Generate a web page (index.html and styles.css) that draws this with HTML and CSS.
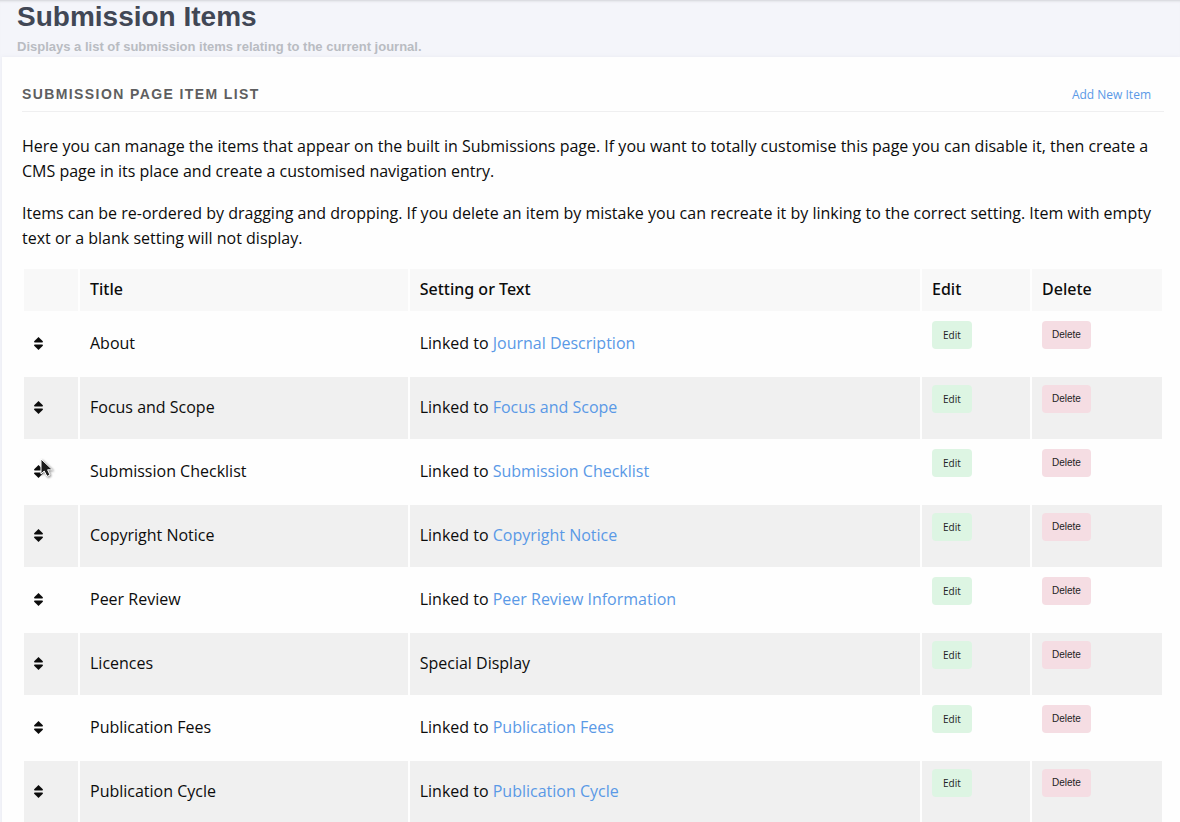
FILE: index.html
```html
<!DOCTYPE html>
<html lang="en">
<head>
    <meta charset="UTF-8">
    <meta name="viewport" content="width=device-width, initial-scale=1.0">
    <title>Submission Items</title>
    <link rel="stylesheet" href="styles.css">
</head>
<body>
    <svg class="sprite" aria-hidden="true">
        <symbol id="sort" viewBox="0 0 9 13">
            <path d="M4.5 0 L8.8 4.2 Q9.2 5.5 8.2 5.5 H0.8 Q-0.2 5.5 0.2 4.2 Z"/>
            <path d="M4.5 13 L8.8 8.8 Q9.2 7.5 8.2 7.5 H0.8 Q-0.2 7.5 0.2 8.8 Z"/>
        </symbol>
    </svg>

    <header class="page-header">
        <h1>Submission Items</h1>
        <p class="subtitle">Displays a list of submission items relating to the current journal.</p>
    </header>

    <main class="card">
        <div class="card-title">
            <h2>Submission Page Item List</h2>
            <a class="add-link" href="#">Add New Item</a>
        </div>

        <p>Here you can manage the items that appear on the built in Submissions page. If you want to totally customise this page you can disable it, then create a CMS page in its place and create a customised navigation entry.</p>
        <p>Items can be re-ordered by dragging and dropping. If you delete an item by mistake you can recreate it by linking to the correct setting. Item with empty text or a blank setting will not display.</p>

        <table class="items">
            <colgroup>
                <col class="col-handle">
                <col class="col-title">
                <col>
                <col class="col-edit">
                <col class="col-delete">
            </colgroup>
            <thead>
                <tr>
                    <th></th>
                    <th>Title</th>
                    <th>Setting or Text</th>
                    <th>Edit</th>
                    <th>Delete</th>
                </tr>
            </thead>
            <tbody>
                <tr>
                    <td><svg class="handle"><use href="#sort"/></svg></td>
                    <td>About</td>
                    <td>Linked to <a href="#">Journal Description</a></td>
                    <td class="action"><a class="btn btn-edit" href="#">Edit</a></td>
                    <td class="action"><button class="btn btn-delete" type="button">Delete</button></td>
                </tr>
                <tr>
                    <td><svg class="handle"><use href="#sort"/></svg></td>
                    <td>Focus and Scope</td>
                    <td>Linked to <a href="#">Focus and Scope</a></td>
                    <td class="action"><a class="btn btn-edit" href="#">Edit</a></td>
                    <td class="action"><button class="btn btn-delete" type="button">Delete</button></td>
                </tr>
                <tr>
                    <td class="hovered">
                        <svg class="handle"><use href="#sort"/></svg>
                        <svg class="cursor" viewBox="0 0 16 20">
                            <path d="M2 1 V16 L5.2 13 L8 18.4 L11 17 L8.6 11.8 H13.4 Z"/>
                        </svg>
                    </td>
                    <td>Submission Checklist</td>
                    <td>Linked to <a href="#">Submission Checklist</a></td>
                    <td class="action"><a class="btn btn-edit" href="#">Edit</a></td>
                    <td class="action"><button class="btn btn-delete" type="button">Delete</button></td>
                </tr>
                <tr>
                    <td><svg class="handle"><use href="#sort"/></svg></td>
                    <td>Copyright Notice</td>
                    <td>Linked to <a href="#">Copyright Notice</a></td>
                    <td class="action"><a class="btn btn-edit" href="#">Edit</a></td>
                    <td class="action"><button class="btn btn-delete" type="button">Delete</button></td>
                </tr>
                <tr>
                    <td><svg class="handle"><use href="#sort"/></svg></td>
                    <td>Peer Review</td>
                    <td>Linked to <a href="#">Peer Review Information</a></td>
                    <td class="action"><a class="btn btn-edit" href="#">Edit</a></td>
                    <td class="action"><button class="btn btn-delete" type="button">Delete</button></td>
                </tr>
                <tr>
                    <td><svg class="handle"><use href="#sort"/></svg></td>
                    <td>Licences</td>
                    <td>Special Display</td>
                    <td class="action"><a class="btn btn-edit" href="#">Edit</a></td>
                    <td class="action"><button class="btn btn-delete" type="button">Delete</button></td>
                </tr>
                <tr>
                    <td><svg class="handle"><use href="#sort"/></svg></td>
                    <td>Publication Fees</td>
                    <td>Linked to <a href="#">Publication Fees</a></td>
                    <td class="action"><a class="btn btn-edit" href="#">Edit</a></td>
                    <td class="action"><button class="btn btn-delete" type="button">Delete</button></td>
                </tr>
                <tr>
                    <td><svg class="handle"><use href="#sort"/></svg></td>
                    <td>Publication Cycle</td>
                    <td>Linked to <a href="#">Publication Cycle</a></td>
                    <td class="action"><a class="btn btn-edit" href="#">Edit</a></td>
                    <td class="action"><button class="btn btn-delete" type="button">Delete</button></td>
                </tr>
            </tbody>
        </table>
    </main>
</body>
</html>
```
FILE: styles.css
```css
* { box-sizing: border-box; }
body { margin: 0; font-family: "Open Sans", "Noto Sans", sans-serif; font-size: 16px; line-height: 25px; color: #0c0c0c; background-color: #f4f5fa; }
a { color: #5a99e6; text-decoration: none; }
p { margin: 0 0 17px; }
.sprite { display: none; }

.page-header { padding: 0 17px 1px; border-top: 1px solid #dcdde2; box-shadow: inset 0 2px 2px -1px #e4e5ea; font-family: "Liberation Sans", Arial, sans-serif; font-weight: bold; }
.page-header h1 { margin: 0; font-size: 28px; line-height: 32px; color: #414755; }
.page-header .subtitle { margin: 4px 0 0; font-size: 13px; line-height: 19px; color: #b9bcc2; }

.card { margin-left: 2px; padding: 20px 16px 0 20px; background-color: #fefefe; box-shadow: 0 0 4px #e8e8f0; }
.card-title { display: flex; justify-content: space-between; align-items: center; height: 35px; margin-bottom: 22px; padding-right: 13px; border-bottom: 1px solid #efeff0; }
.card-title h2 { margin: 0; font-family: "Liberation Sans", Arial, sans-serif; font-size: 14px; letter-spacing: 0.1em; text-transform: uppercase; color: #5e5e60; }
.add-link { font-size: 12px; }

.items { width: 100%; table-layout: fixed; border-spacing: 2px; margin-top: -1px; }
.col-handle { width: 54px; }
.col-title { width: 29%; }
.col-edit { width: 108px; }
.col-delete { width: 130px; }
.items th { height: 42px; padding: 0 10px 2px; font-family: "Noto Sans", "Open Sans", sans-serif; font-weight: 500; text-align: left; background-color: #f8f8f8; }
.items td { height: 62px; padding: 0 10px 2px; }
.items tbody tr:nth-child(even) td { background-color: #f0f0f0; }
.items .action { padding-top: 8px; vertical-align: top; }

.handle { display: block; width: 9px; height: 13px; fill: #0c0c0c; }
.hovered { position: relative; }
.cursor { position: absolute; left: 15px; top: 17px; width: 16px; height: 20px; fill: #1c1c1c; stroke: #fff; stroke-width: 1; filter: drop-shadow(1px 1px 1px #888); }

.btn { display: block; width: fit-content; height: 28px; padding: 0 10px; border: none; border-radius: 4px; font-size: 10px; line-height: 28px; color: #222; cursor: pointer; }
.btn-edit { padding: 0 11px; background-color: #ddf5e3; }
.btn-delete { font-family: "Liberation Sans", Arial, sans-serif; background-color: #f5dde3; }
```
